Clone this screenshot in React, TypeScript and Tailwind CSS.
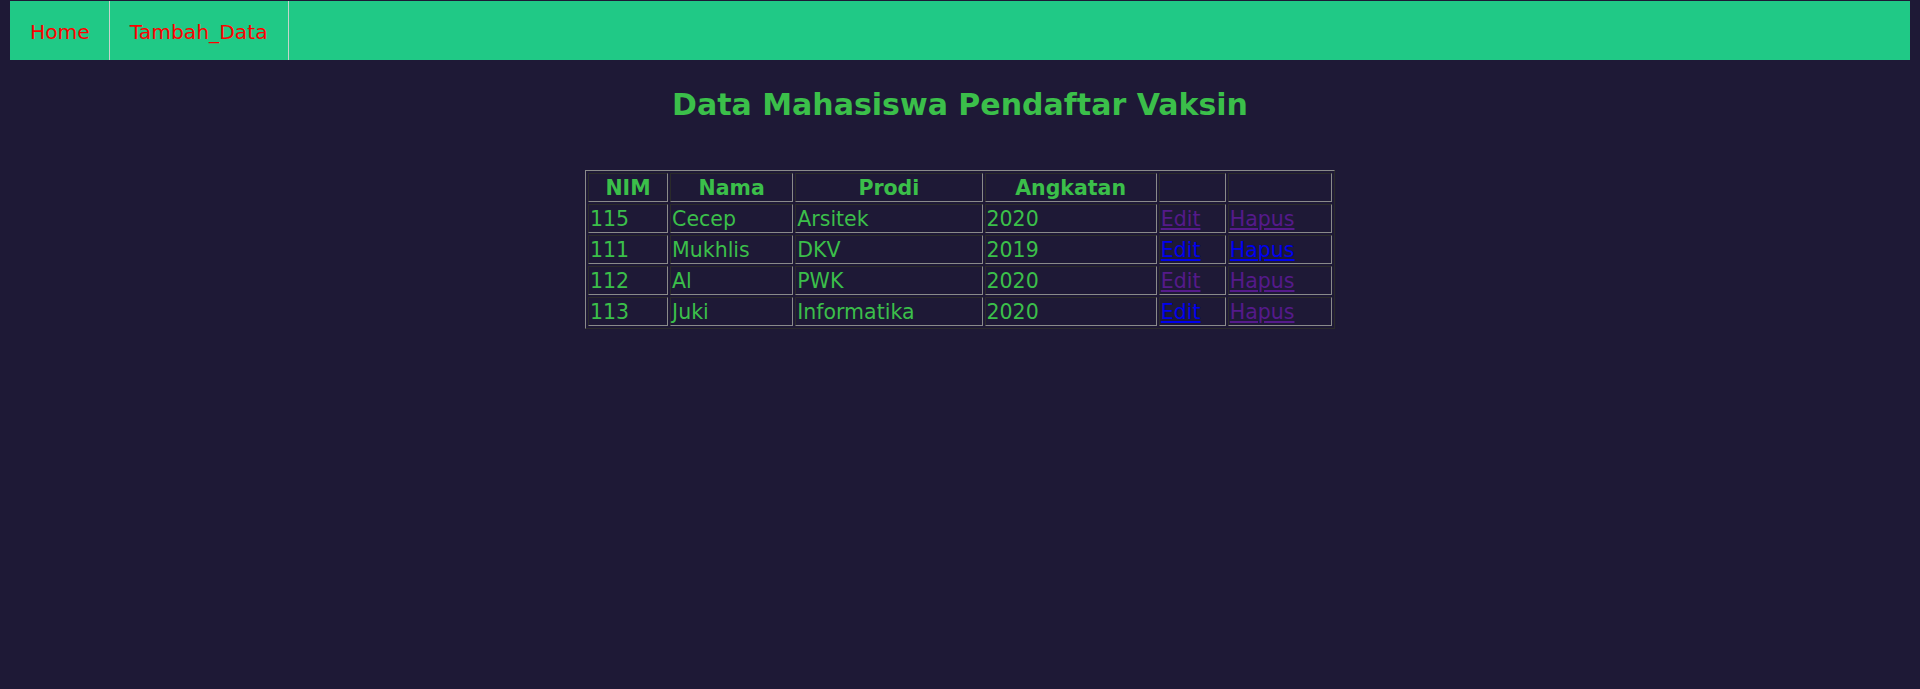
const rows = [
  { nim: '115', nama: 'Cecep', prodi: 'Arsitek', angkatan: '2020', editSeen: true, hapusSeen: true },
  { nim: '111', nama: 'Mukhlis', prodi: 'DKV', angkatan: '2019', editSeen: false, hapusSeen: false },
  { nim: '112', nama: 'Al', prodi: 'PWK', angkatan: '2020', editSeen: true, hapusSeen: true },
  { nim: '113', nama: 'Juki', prodi: 'Informatika', angkatan: '2020', editSeen: false, hapusSeen: true },
]

const cell = 'border border-t-[#2a2a2a] border-l-[#2a2a2a] border-b-[#8a8a8a] border-r-[#8a8a8a] px-[1px] pt-[2px] pb-0 leading-[25px] h-[29px] align-middle'

export default function App() {
  return (
    <div className="min-h-[689px] bg-[#1e1936] pt-[1px] font-['DejaVu_Sans',sans-serif] text-[20.5px]">
      {/* Nav */}
      <ul className="mx-[10px] h-[59px] bg-[#20c986] flex text-[20.25px]">
        <li className="h-full border-r border-[#c4d4cc] pl-[20px] pr-[19px] pt-[3px] flex items-center text-[#ff0000]">Home</li>
        <li className="h-full border-r border-[#c4d4cc] px-[20px] pt-[3px] flex items-center text-[#ff0000]">Tambah_Data</li>
      </ul>

      <h1 className="mt-[22px] text-center text-[30px] font-bold text-[#3bbf4a]">Data Mahasiswa Pendaftar Vaksin</h1>

      <div className="mt-[43px] flex justify-center">
        <table className="table-fixed border-separate border-spacing-[2px] border border-t-[#8a8a8a] border-l-[#8a8a8a] border-b-[#2a2a2a] border-r-[#2a2a2a] text-[#3bbf4a] w-[750px]">
          <colgroup>
            <col className="w-[80px]" />
            <col className="w-[123px]" />
            <col className="w-[187px]" />
            <col className="w-[172px]" />
            <col className="w-[67px]" />
            <col className="w-[104px]" />
          </colgroup>
          <thead>
            <tr className="font-bold">
              <th className={cell + ' text-center'}>NIM</th>
              <th className={cell + ' text-center'}>Nama</th>
              <th className={cell + ' text-center'}>Prodi</th>
              <th className={cell + ' text-center'}>Angkatan</th>
              <th className={cell}></th>
              <th className={cell}></th>
            </tr>
          </thead>
          <tbody>
            {rows.map(r => (
              <tr key={r.nim}>
                <td className={cell}>{r.nim}</td>
                <td className={cell}>{r.nama}</td>
                <td className={cell}>{r.prodi}</td>
                <td className={cell}>{r.angkatan}</td>
                <td className={cell}>
                  <a href="#" className={'underline ' + (r.editSeen ? 'text-[#551a8b]' : 'text-[#0000ee]')}>Edit</a>
                </td>
                <td className={cell}>
                  <a href="#" className={'underline ' + (r.hapusSeen ? 'text-[#551a8b]' : 'text-[#0000ee]')}>Hapus</a>
                </td>
              </tr>
            ))}
          </tbody>
        </table>
      </div>
    </div>
  )
}
